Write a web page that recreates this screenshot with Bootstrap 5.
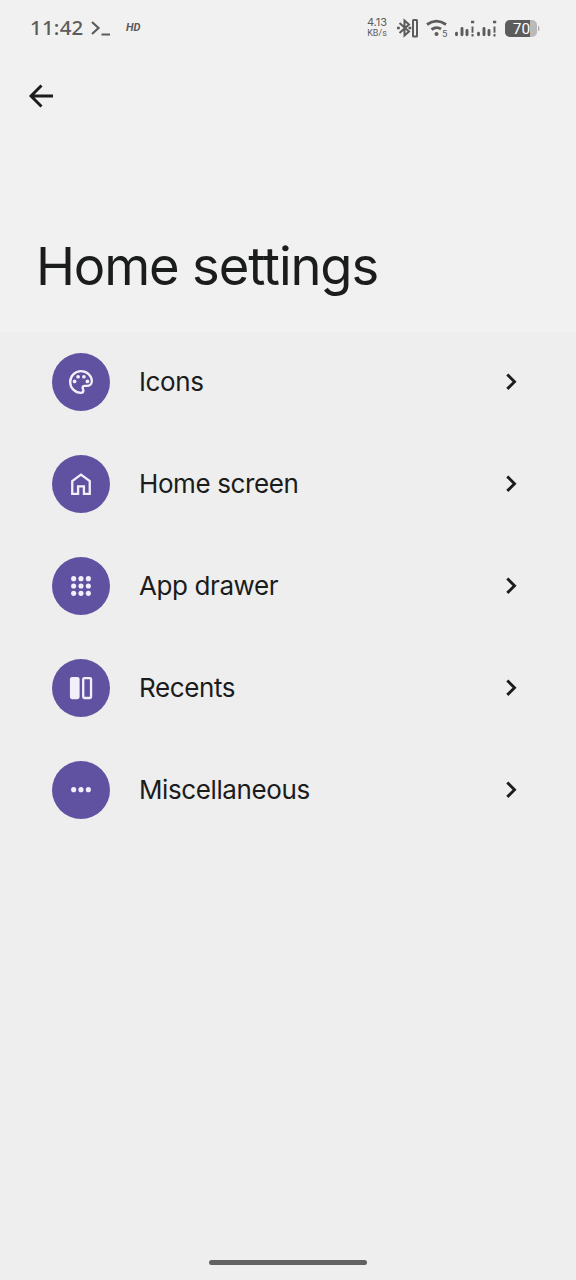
<!DOCTYPE html>
<html lang="en">
<head>
<meta charset="utf-8">
<meta name="viewport" content="width=device-width, initial-scale=1">
<title>Home settings</title>
<link href="https://cdn.jsdelivr.net/npm/bootstrap@5.3.0/dist/css/bootstrap.min.css" rel="stylesheet">
<style>
  body { background: #eee; color: #1b1c1c; font-family: Inter, "Liberation Sans", sans-serif; height: 1280px; overflow: hidden; }
  svg { display: block; flex: none; }
  .top-area { height: 332px; background: #f1f1f1; }
  .status { height: 55px; padding: 0 35px 0 30px; color: #5c5c5c; }
  .clock { font: 500 20.5px/55px "Noto Sans", sans-serif; letter-spacing: .2px; width: 61px; }
  .hd { font: italic 700 11px/54px Roboto, sans-serif; margin-left: 15px; }
  .speed { font-size: 11px; line-height: 11px; width: 24px; white-space: nowrap; }
  .speed small { font: 9px/11px Roboto, sans-serif; display: block; }
  .back-btn { padding: 28px 0 0 28px; }
  .page-title { font-size: 52.5px; line-height: 64px; font-weight: 400; letter-spacing: -1.15px; margin: 0; padding: 125px 0 0 36px; white-space: nowrap; }
  .entry { height: 102px; padding: 0 56px 2px 52px; color: inherit; text-decoration: none; }
  .disc { width: 58px; height: 58px; border-radius: 50%; background: #6052a1; margin-right: 29px; }
  .label { font-size: 26px; line-height: 34px; letter-spacing: -.4px; white-space: nowrap; }
  .chev { margin-bottom: 1px; }
  .home-bar { width: 158px; height: 5px; border-radius: 3px; background: #616161; margin-bottom: 15px; }
</style>
</head>
<body class="d-flex flex-column">
<header class="top-area">
  <div class="status d-flex align-items-center">
    <span class="clock">11:42</span>
    <svg width="20" height="20" viewBox="0 0 20 20" fill="none" stroke="currentColor" stroke-width="2.200"><path d="M1 4 7.500 10 1 16M10.500 16.500H19"/></svg>
    <span class="hd">HD</span>
    <div class="d-flex align-items-center ms-auto">
      <div class="speed text-center">4.13<small>KB/s</small></div>
      <svg class="ms-2" width="24" height="22" viewBox="0 0 24 22" fill="none" stroke="currentColor" stroke-width="2"><path d="M2.500 6 12 14.500 7.500 18.500V3.500L12 7.500 2.500 16"/><path d="M0 11h2.800M11.500 11h2.800" stroke-width="2.500"/><rect x="16" y="3" width="4" height="16.500" rx=".5"/></svg>
      <svg style="margin-left:5px" width="24" height="22" viewBox="0 0 24 22" fill="none" stroke="currentColor" stroke-width="2.800"><path d="M1 7.500Q10.500 .8 20 7.500M5.500 12.500Q10.500 9 15 12"/><circle cx="10.500" cy="17" r="2" fill="currentColor" stroke="none"/><text x="16" y="19.500" font-size="9.500" font-family="Roboto" fill="currentColor" stroke="none">5</text></svg>
      <svg style="margin-left:5px" width="43" height="22" viewBox="0 0 43 22" fill="none" stroke="currentColor" stroke-width="2.900" stroke-linecap="round"><path d="M1.500 16.200v1.600M7 11.500v6.300M12 13.500v4.300M23.500 16.200v1.600M29 11.500v6.300M34 13.500v4.300"/><path d="M17.500 9.500v6.300M39.500 9.500v6.300" stroke-width="1.900" stroke-linecap="butt"/><path d="M16 5h3.200M38 5h3.200M16.500 18.300h2M38.500 18.300h2" stroke-width="2.600" stroke-linecap="butt"/></svg>
      <svg style="margin-left:7px" width="36" height="18" viewBox="0 0 36 18"><rect x="0" y="1" width="32" height="17" rx="5" fill="#b9b9b9"/><path d="M5 1H25V18H5a5 5 0 0 1-5-5V6a5 5 0 0 1 5-5Z" fill="#5c5c5c"/><path d="M33 7h1q1 2.500 0 5h-1Z" fill="#b0b0b0"/><text x="16.500" y="14.500" text-anchor="middle" font-family="Roboto" font-size="15.500" fill="#fff">70</text></svg>
    </div>
  </div>
  <div class="back-btn"><svg width="26" height="26" viewBox="0 0 26 26" fill="none" stroke="#1b1c1c" stroke-width="2.900"><path d="M25 13H3M13.500 2.500 3 13l10.500 10.500"/></svg></div>
  <h1 class="page-title">Home settings</h1>
</header>
<main class="d-flex flex-column">
  <a class="entry d-flex align-items-center" href="#">
    <span class="disc d-flex align-items-center justify-content-center"><svg width="28" height="28" viewBox="0 0 24 24" fill="none" stroke="#f2effb" stroke-width="2"><path d="M12 2.700a9.300 9.300 0 0 0 0 18.600c1.300 0 2-.9 2-2 0-1-.6-1.400-.6-2.200 0-1 .8-1.800 1.900-1.800H17a4.200 4.200 0 0 0 4.300-4C21.300 6.500 17 2.700 12 2.700Z"/><g fill="#f2effb" stroke="none"><circle cx="6.500" cy="11.500" r="1.600"/><circle cx="9.500" cy="7.500" r="1.600"/><circle cx="14.500" cy="7.500" r="1.600"/><circle cx="17.500" cy="11.500" r="1.600"/></g></svg></span>
    <span class="label">Icons</span>
    <svg class="ms-auto chev" width="16" height="20" viewBox="0 0 16 20" fill="none" stroke="#1b1c1c" stroke-width="2.900"><path d="m3.300 2.500 7.200 7.200-7.200 7.200"/></svg>
  </a>
  <a class="entry d-flex align-items-center" href="#">
    <span class="disc d-flex align-items-center justify-content-center"><svg width="28" height="28" viewBox="0 0 24 24" fill="none" stroke="#f2effb" stroke-width="2"><path d="M4.500 20.500V9.500L12 4l7.500 5.500v11h-5v-6.500h-5v6.500Z"/></svg></span>
    <span class="label">Home screen</span>
    <svg class="ms-auto chev" width="16" height="20" viewBox="0 0 16 20" fill="none" stroke="#1b1c1c" stroke-width="2.900"><path d="m3.300 2.500 7.200 7.200-7.200 7.200"/></svg>
  </a>
  <a class="entry d-flex align-items-center" href="#">
    <span class="disc d-flex align-items-center justify-content-center"><svg width="28" height="28" viewBox="0 0 24 24" fill="#f2effb"><circle cx="5.700" cy="5.700" r="2.200"/><circle cx="12" cy="5.700" r="2.200"/><circle cx="18.300" cy="5.700" r="2.200"/><circle cx="5.700" cy="12" r="2.200"/><circle cx="12" cy="12" r="2.200"/><circle cx="18.300" cy="12" r="2.200"/><circle cx="5.700" cy="18.300" r="2.200"/><circle cx="12" cy="18.300" r="2.200"/><circle cx="18.300" cy="18.300" r="2.200"/></svg></span>
    <span class="label">App drawer</span>
    <svg class="ms-auto chev" width="16" height="20" viewBox="0 0 16 20" fill="none" stroke="#1b1c1c" stroke-width="2.900"><path d="m3.300 2.500 7.200 7.200-7.200 7.200"/></svg>
  </a>
  <a class="entry d-flex align-items-center" href="#">
    <span class="disc d-flex align-items-center justify-content-center"><svg width="28" height="28" viewBox="0 0 24 24"><rect x="2.500" y="2.600" width="8.300" height="19" rx="1.800" fill="#f2effb"/><rect x="13.900" y="3.600" width="6.700" height="17" rx="1" fill="none" stroke="#f2effb" stroke-width="2"/></svg></span>
    <span class="label">Recents</span>
    <svg class="ms-auto chev" width="16" height="20" viewBox="0 0 16 20" fill="none" stroke="#1b1c1c" stroke-width="2.900"><path d="m3.300 2.500 7.200 7.200-7.200 7.200"/></svg>
  </a>
  <a class="entry d-flex align-items-center" href="#">
    <span class="disc d-flex align-items-center justify-content-center"><svg width="28" height="28" viewBox="0 0 24 24" fill="#f2effb"><circle cx="5.700" cy="11.700" r="2.200"/><circle cx="12" cy="11.700" r="2.200"/><circle cx="18.300" cy="11.700" r="2.200"/></svg></span>
    <span class="label">Miscellaneous</span>
    <svg class="ms-auto chev" width="16" height="20" viewBox="0 0 16 20" fill="none" stroke="#1b1c1c" stroke-width="2.900"><path d="m3.300 2.500 7.200 7.200-7.200 7.200"/></svg>
  </a>
</main>
<div class="home-bar mt-auto mx-auto"></div>
<script src="https://cdn.jsdelivr.net/npm/bootstrap@5.3.0/dist/js/bootstrap.bundle.min.js"></script>
</body>
</html>
